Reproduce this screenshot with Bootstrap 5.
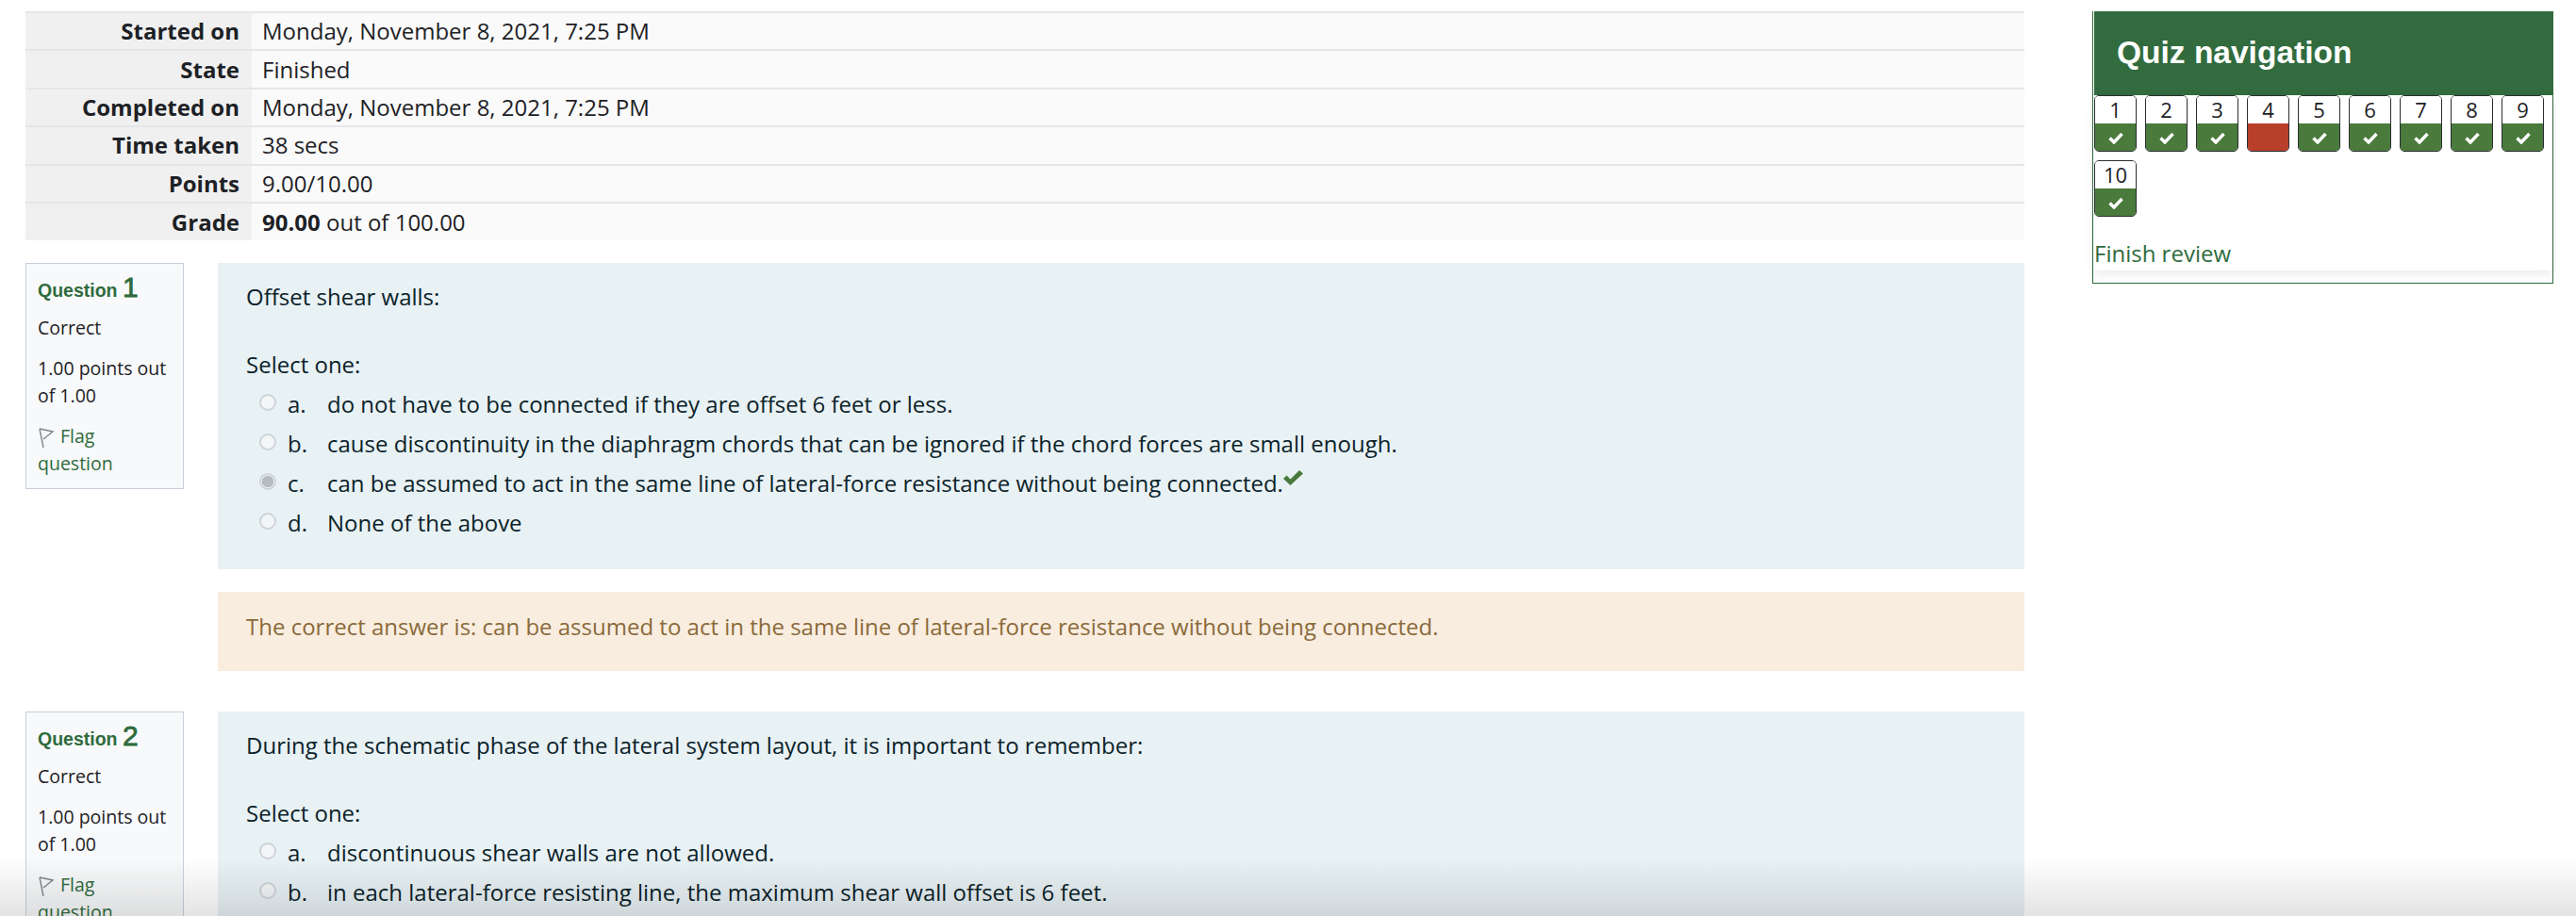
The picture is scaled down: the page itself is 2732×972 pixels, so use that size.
<!DOCTYPE html>
<html lang="en">

<head>
    <meta charset="UTF-8">
    <meta name="viewport" content="width=device-width, initial-scale=1.0">
    <title>Quiz review</title>
    <link href="https://cdn.jsdelivr.net/npm/bootstrap@5.3.2/dist/css/bootstrap.min.css" rel="stylesheet">
    <style>
        html, body {
            height: 972px;
            overflow: hidden;
        }

        body {
            font-family: "Open Sans", sans-serif;
            font-size: 24px;
            color: #1d2125;
            background-color: #fff;
        }

        a {
            color: #2f6b3d;
            text-decoration: none;
        }

        .page-wrap {
            padding: 12px 24px 0 27px;
            gap: 72px;
        }

        .main-col {
            width: 2120px;
            flex: none;
        }

        /* summary table */
        .summary-table {
            margin-bottom: 24px;
            width: 100%;
            border-top: 2px solid #e3e6ea;
        }

        .summary-table th,
        .summary-table td {
            height: 40.4px;
            padding: 0;
            vertical-align: middle;
            border-bottom: 2px solid #e3e6ea;
            line-height: 1;
            font-size: 24px;
            color: #1d2125;
        }

        .summary-table tr:last-child th,
        .summary-table tr:last-child td {
            border-bottom: 0;
        }

        .summary-table th {
            width: 240px;
            background-color: #f0f0f0;
            text-align: right;
            padding-right: 13px;
        }

        .summary-table td {
            background-color: #fafafa;
            padding-left: 11px;
        }

        /* question */
        .question-row {
            gap: 36px;
            margin-bottom: 43px;
        }

        .question-info {
            width: 168px;
            height: 240px;
            flex: none;
            border: 1px solid #c8d0dc;
            background-color: #f8f9fa;
            padding: 5px 12px 0;
            font-size: 19.5px;
            line-height: 29px;
            color: #1d2125;
        }

        .question-row:last-child .question-info {
            height: 300px;
        }

        .question-title {
            font-family: "Liberation Sans", sans-serif;
            font-weight: 700;
            font-size: 19.5px;
            color: #2f6b3d;
            line-height: 40px;
            margin-bottom: 5px;
        }

        .question-title span {
            font-size: 30px;
            font-weight: 400;
            -webkit-text-stroke: .8px #2f6b3d;
        }

        .info-line {
            margin-bottom: 14px;
        }

        .flag-ico {
            width: 18px;
            height: 24px;
            margin-right: 6px;
            vertical-align: -6px;
        }

        .question-body {
            flex: 1;
        }

        .formulation {
            background-color: #e8f1f4;
            color: #0b2229;
            height: 325px;
            padding: 18px 30px 0;
            font-size: 24px;
            line-height: 36px;
        }

        .question-row:last-child .formulation {
            height: 400px;
        }

        .prompt {
            margin-bottom: 36px;
        }

        .choices {
            padding-top: 3px;
        }

        .choice {
            height: 42px;
            padding-left: 14px;
        }

        .choice .form-check-input {
            width: 18px;
            height: 18px;
            margin: 0 12px 5px 0;
            flex: none;
            background-color: #f3f6f7;
            border: 2px solid #cdd4d8;
            opacity: 1;
        }

        .choice .form-check-input:checked {
            background-color: #f3f6f7;
            border-color: #cdd4d8;
            background-image: radial-gradient(circle, #b4bcc1 0, #b4bcc1 60%, transparent 66%);
        }

        .choice-letter {
            width: 42px;
            flex: none;
        }

        .ok-mark {
            width: 21px;
            height: 16px;
            vertical-align: 7px;
        }

        .feedback-box {
            margin-top: 24px;
            height: 84px;
            padding: 0 30px 10px;
            background-color: #f9eddf;
            color: #8a6a3b;
        }

        /* quiz navigation */
        .quiz-nav {
            width: 489px;
            height: 289px;
            flex: none;
            border: 1px solid #316b3e;
            border-top: 0;
        }

        .quiz-nav-head {
            height: 89px;
            margin-left: 1px;
            padding-left: 24px;
            background-color: #316b3e;
            color: #fff;
            font-family: "Liberation Sans", sans-serif;
            font-weight: 700;
            font-size: 33.5px;
        }

        .quiz-nav-body {
            padding: 0 0 0 1px;
            height: 186px;
            box-shadow: 0 4px 10px rgba(0, 0, 0, .08);
        }

        .nav-blocks {
            gap: 9px;
        }

        .nav-block {
            width: 45px;
            height: 60px;
            border: 1px solid #2a2e33;
            border-radius: 5px;
            overflow: hidden;
            font-size: 22px;
        }

        .nav-block-num {
            height: 29px;
            line-height: 29px;
            background-color: #fff;
            text-align: center;
            color: #1d2125;
        }

        .nav-block-state {
            height: 30px;
            background-color: #4a7a3c;
        }

        .nav-block-state.wrong {
            background-color: #b8402b;
        }

        .nav-block-state svg {
            width: 16px;
            height: 13px;
        }

        .finish-link {
            display: block;
            margin-top: 21px;
            line-height: 36px;
        }

        .bottom-fade {
            position: absolute;
            left: 0;
            right: 0;
            bottom: 0;
            height: 62px;
            background: linear-gradient(to bottom, rgba(0, 0, 0, 0), rgba(0, 0, 0, .11));
            pointer-events: none;
        }
    </style>
</head>

<body>
    <div class="page-wrap d-flex align-items-start">
        <div class="main-col">
            <table class="summary-table">
                <tbody>
                    <tr><th>Started on</th><td>Monday, November 8, 2021, 7:25 PM</td></tr>
                    <tr><th>State</th><td>Finished</td></tr>
                    <tr><th>Completed on</th><td>Monday, November 8, 2021, 7:25 PM</td></tr>
                    <tr><th>Time taken</th><td>38 secs</td></tr>
                    <tr><th>Points</th><td>9.00/10.00</td></tr>
                    <tr><th>Grade</th><td><b>90.00</b> out of 100.00</td></tr>
                </tbody>
            </table>

            <!-- Question 1 -->
            <div class="question-row d-flex align-items-start">
                <div class="question-info">
                    <div class="question-title">Question <span>1</span></div>
                    <div class="info-line">Correct</div>
                    <div class="info-line">1.00 points out of 1.00</div>
                    <a href="#"><svg class="flag-ico" viewBox="0 0 18 24" fill="none" stroke="#7f8489" stroke-width="1.4"><path d="M2 3l4 20M2 3l14 3-10 8"/></svg>Flag question</a>
                </div>
                <div class="question-body">
                    <div class="formulation">
                        <div class="prompt">Offset shear walls:</div>
                        <div>Select one:</div>
                        <div class="choices">
                            <div class="choice d-flex align-items-center"><input class="form-check-input" type="radio" disabled><span class="choice-letter">a.</span><span>do not have to be connected if they are offset 6 feet or less.</span></div>
                            <div class="choice d-flex align-items-center"><input class="form-check-input" type="radio" disabled><span class="choice-letter">b.</span><span>cause discontinuity in the diaphragm chords that can be ignored if the chord forces are small enough.</span></div>
                            <div class="choice d-flex align-items-center"><input class="form-check-input" type="radio" disabled checked><span class="choice-letter">c.</span><span>can be assumed to act in the same line of lateral-force resistance without being connected.<svg class="ok-mark" viewBox="0 0 21 16"><path d="M0 9l3.5-3.5 4 4L17 0l4 3.5L7.5 16z" fill="#4a7a3c"/></svg></span></div>
                            <div class="choice d-flex align-items-center"><input class="form-check-input" type="radio" disabled><span class="choice-letter">d.</span><span>None of the above</span></div>
                        </div>
                    </div>
                    <div class="feedback-box d-flex align-items-center">The correct answer is: can be assumed to act in the same line of lateral-force resistance without being connected.</div>
                </div>
            </div>

            <!-- Question 2 -->
            <div class="question-row d-flex align-items-start">
                <div class="question-info">
                    <div class="question-title">Question <span>2</span></div>
                    <div class="info-line">Correct</div>
                    <div class="info-line">1.00 points out of 1.00</div>
                    <a href="#"><svg class="flag-ico" viewBox="0 0 18 24" fill="none" stroke="#7f8489" stroke-width="1.4"><path d="M2 3l4 20M2 3l14 3-10 8"/></svg>Flag question</a>
                </div>
                <div class="question-body">
                    <div class="formulation">
                        <div class="prompt">During the schematic phase of the lateral system layout, it is important to remember:</div>
                        <div>Select one:</div>
                        <div class="choices">
                            <div class="choice d-flex align-items-center"><input class="form-check-input" type="radio" disabled><span class="choice-letter">a.</span><span>discontinuous shear walls are not allowed.</span></div>
                            <div class="choice d-flex align-items-center"><input class="form-check-input" type="radio" disabled><span class="choice-letter">b.</span><span>in each lateral-force resisting line, the maximum shear wall offset is 6 feet.</span></div>
                        </div>
                    </div>
                </div>
            </div>
        </div>

        <aside class="quiz-nav">
            <div class="quiz-nav-head d-flex align-items-center">Quiz navigation</div>
            <div class="quiz-nav-body">
                <div class="nav-blocks d-flex flex-wrap" id="navBlocks"></div>
                <a class="finish-link" href="#">Finish review</a>
            </div>
        </aside>
    </div>

    <div class="bottom-fade"></div>

    <script>
        // question 4 is the only wrong one
        const tick = '<svg viewBox="0 0 16 13"><path d="M1.5 6.5l4.5 4.5 8.5-9" fill="none" stroke="#fff" stroke-width="3.4"/></svg>';
        let blocksHtml = '';
        for (let i = 1; i <= 10; i++) {
            const wrong = i === 4;
            blocksHtml += '<div class="nav-block"><div class="nav-block-num">' + i + '</div>' +
                '<div class="nav-block-state d-flex align-items-center justify-content-center' + (wrong ? ' wrong' : '') + '">' +
                (wrong ? '' : tick) + '</div></div>';
        }
        document.getElementById('navBlocks').innerHTML = blocksHtml;
    </script>
    <script src="https://cdn.jsdelivr.net/npm/bootstrap@5.3.2/dist/js/bootstrap.bundle.min.js"></script>
</body>

</html>
